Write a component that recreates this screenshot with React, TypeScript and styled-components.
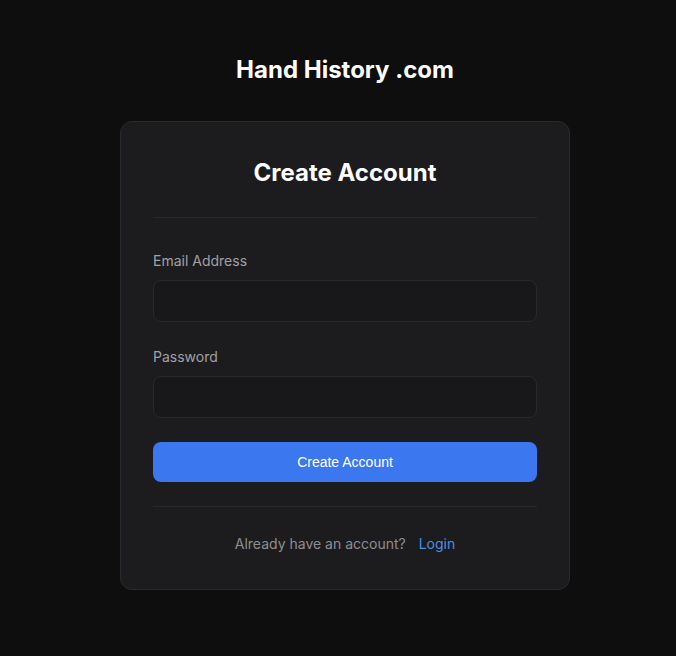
import styled, { createGlobalStyle } from 'styled-components';

const GlobalStyle = createGlobalStyle`
  html, body {
    margin: 0;
    padding: 0;
    background: #0e0e0f;
    font-family: Inter, "Liberation Sans", sans-serif;
    color: #ffffff;
  }
  * {
    box-sizing: border-box;
  }
`;

const App = () => {
  return (
    <>
      <GlobalStyle />
      <Page>
        <Brand>Hand History .com</Brand>
        <Card>
          <CardTitle>Create Account</CardTitle>
          <Divider />
          <Form onSubmit={(e) => e.preventDefault()}>
            <Field>
              <Label htmlFor="email">Email Address</Label>
              <Input id="email" type="email" />
            </Field>
            <Field>
              <Label htmlFor="password">Password</Label>
              <Input id="password" type="password" />
            </Field>
            <SubmitButton type="submit">Create Account</SubmitButton>
          </Form>
          <Divider />
          <Footer>
            Already have an account?
            <LoginLink href="#">Login</LoginLink>
          </Footer>
        </Card>
      </Page>
    </>
  );
};

export default App;

const Page = styled.div`
  min-height: 656px;
  display: flex;
  flex-direction: column;
  align-items: center;
  padding: 54px 0 0 14px;
`;

const Brand = styled.h1`
  margin: 0 0 35px;
  font-size: 24px;
  line-height: 32px;
  font-weight: 700;
  color: #ffffff;
`;

const Card = styled.div`
  width: 450px;
  background: #1c1c1e;
  border: 1px solid #2a2a2d;
  border-radius: 12px;
  padding: 31px 32px 33px;
`;

const CardTitle = styled.h2`
  margin: 0 0 24px;
  text-align: center;
  font-size: 24px;
  line-height: 40px;
  font-weight: 700;
  color: #ffffff;
`;

const Divider = styled.hr`
  margin: 0;
  border: none;
  height: 1px;
  background: #28282b;
`;

const Form = styled.form`
  display: flex;
  flex-direction: column;
  gap: 24px;
  padding: 32px 0 24px;
`;

const Field = styled.div`
  display: flex;
  flex-direction: column;
  gap: 8px;
`;

const Label = styled.label`
  font-size: 14px;
  line-height: 22px;
  font-weight: 400;
  color: #a1a1a6;
`;

const Input = styled.input`
  height: 42px;
  width: 100%;
  background: #18181a;
  border: 1px solid #29292c;
  border-radius: 8px;
  padding: 0 12px;
  color: #ffffff;
  font: inherit;
  font-size: 14px;
  outline: none;
`;

const SubmitButton = styled.button`
  height: 40px;
  width: 100%;
  border: none;
  border-radius: 8px;
  background: #3b78ef;
  color: #ffffff;
  font-family: "Liberation Sans", Arial, sans-serif;
  font-size: 14px;
  font-weight: 400;
  cursor: pointer;
`;

const Footer = styled.p`
  margin: 0;
  padding-top: 25px;
  text-align: center;
  font-size: 14px;
  line-height: 24px;
  color: #8e8e93;
`;

const LoginLink = styled.a`
  margin-left: 13px;
  color: #4a8fe4;
  text-decoration: none;
`;
